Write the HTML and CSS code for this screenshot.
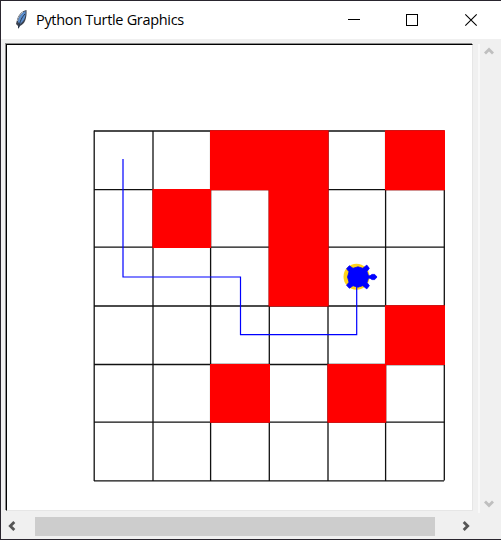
FILE: index.html
```html
<!DOCTYPE html>
<html lang="en">
<head>
<meta charset="utf-8">
<title>Python Turtle Graphics</title>
<link rel="stylesheet" href="styles.css">
</head>
<body>
<div class="window">
  <header class="titlebar">
    <svg class="feather" width="14" height="20" viewBox="0 0 14 20">
      <path d="M11.500 0C7 1 3 5 2 10l-1 4 2 2v3l2-3c5-2 7-8 6.500-16z" fill="#3c4250"/>
      <path d="M10.500 1C6.500 3 3.500 7 3 12l2 2c4-3 6-7 5.500-13z" fill="#5b8fd0"/>
      <path d="M10 4C7 7 5 11 3.500 18" stroke="#26364d" fill="none"/>
      <path d="M8 2C5 5 3 7 2.500 11" stroke="#aeb8c5" fill="none"/>
    </svg>
    <h1 class="title">Python Turtle Graphics</h1>
    <svg class="controls" width="174" height="37" viewBox="327 2 174 37">
      <path d="M348 19.500h12" stroke="#000"/>
      <rect x="406.500" y="14.500" width="11" height="11" fill="none" stroke="#000"/>
      <path d="M465.300 14.300l11.400 11.400M476.700 14.300l-11.400 11.400" stroke="#000" stroke-width="1.100"/>
    </svg>
  </header>
  <div class="body">
    <main class="canvas">
      <svg class="drawing" width="465" height="465" viewBox="7 45 465 465">
        <g class="grid">
          <path d="M94.200 130.400V481M153 131V481M210.600 131V481M269.300 131V481M328 131V481M385.600 131V481M444.300 131V480.500"/>
          <path d="M94 131H444.500M94 189.700H444.500M94 247.200H444.500M94 306H444.500M94 364.500H444.500M94 422.200H444.500M94 480.900H444"/>
        </g>
        <g class="walls">
          <path d="M210 130.300H328.600V306.500H268.600V190.300H210z"/>
          <path d="M385 130.300h60v60h-60z"/>
          <path d="M152.400 189h58.700v58.900h-58.700z"/>
          <path d="M385 305.300h60v59.800h-60z"/>
          <path d="M210 363.900h60v58.900h-60z"/>
          <path d="M327.400 363.900h58.800v58.900h-58.800z"/>
        </g>
        <circle cx="356.500" cy="276.800" r="13" fill="#ffd51a"/>
        <path class="trail" d="M123 159V277H240.500V334.600H356.700V277"/>
        <path class="turtle" d="M377 277l-2.300 2.600h-2.700l-2-1.400-1.500 0-1.500 4.300 2.300 3.200-2.500 3.200-4-3.200-4.800 1.500-5-1.500-3.600 2.600-2.800-3 2.400-3.100-1.500-5.200 1.500-5.200-2.400-3.100 2.800-3 3.600 2.600 5-1.500 4.800 1.500 4-3.200 2.500 3.200-2.300 3.200 1.500 4.300h1.500l2-1.400h2.700z"/>
      </svg>
    </main>
    <div class="vscroll">
      <svg width="10" height="8" viewBox="0 0 10 8"><path d="M1 6.500l4-4 4 4"/></svg>
      <svg width="10" height="8" viewBox="0 0 10 8"><path d="M1 1.500l4 4 4-4"/></svg>
    </div>
  </div>
  <footer class="hscroll">
    <svg width="8" height="10" viewBox="0 0 8 10"><path d="M6.300 1l-4 4 4 4"/></svg>
    <div class="thumb"></div>
    <svg width="8" height="10" viewBox="0 0 8 10"><path d="M1.700 1l4 4-4 4"/></svg>
  </footer>
</div>
</body>
</html>
```

FILE: styles.css
```css
* { box-sizing: border-box; }
body { margin: 0; overflow: hidden; }
svg { display: block; flex: none; }
.window {
  width: 501px;
  height: 540px;
  display: flex;
  flex-direction: column;
  background: #f0f0f0;
  border: solid #29252e;
  border-width: 1px 0 1px 1px;
}
.titlebar {
  height: 38px;
  flex: none;
  display: flex;
  align-items: center;
  background: #fff;
  padding-left: 14px;
}
.title {
  margin: 0 0 0 7px;
  flex: 1;
  font: 400 14.500px/20px "Open Sans", "Noto Sans", sans-serif;
  letter-spacing: -0.310px;
  color: #000;
  white-space: nowrap;
}
.body {
  height: 474px;
  flex: none;
  display: flex;
  padding: 5px 0 0 5px;
}
.canvas {
  width: 467px;
  height: 467px;
  border: 1px solid #e6e6e6;
  border-top-color: #000;
  border-left-color: #000;
  box-shadow: -1px -1px 0 #8c8c8c;
  background: #fff;
}
.grid { fill: none; stroke: #111; stroke-width: 1.300; }
.walls { fill: #f00; }
.trail { fill: none; stroke: #00f; stroke-width: 1.200; }
.turtle { fill: #00f; stroke: #00f; stroke-width: 0.800; }
.vscroll {
  width: 23px;
  margin-left: 5px;
  border-left: 2px solid #f8f8f8;
  display: flex;
  flex-direction: column;
  justify-content: space-between;
  align-items: center;
  padding: 3px 3px 5px 0;
}
.vscroll path { fill: none; stroke: #bfbfbf; stroke-width: 2.800; }
.hscroll {
  height: 26px;
  display: flex;
  align-items: center;
  padding: 0 0 0 7px;
}
.hscroll path { fill: none; stroke: #555; stroke-width: 2.800; }
.thumb {
  width: 400px;
  height: 19px;
  margin: 0 27px 0 19px;
  background: #cdcdcd;
}
```
